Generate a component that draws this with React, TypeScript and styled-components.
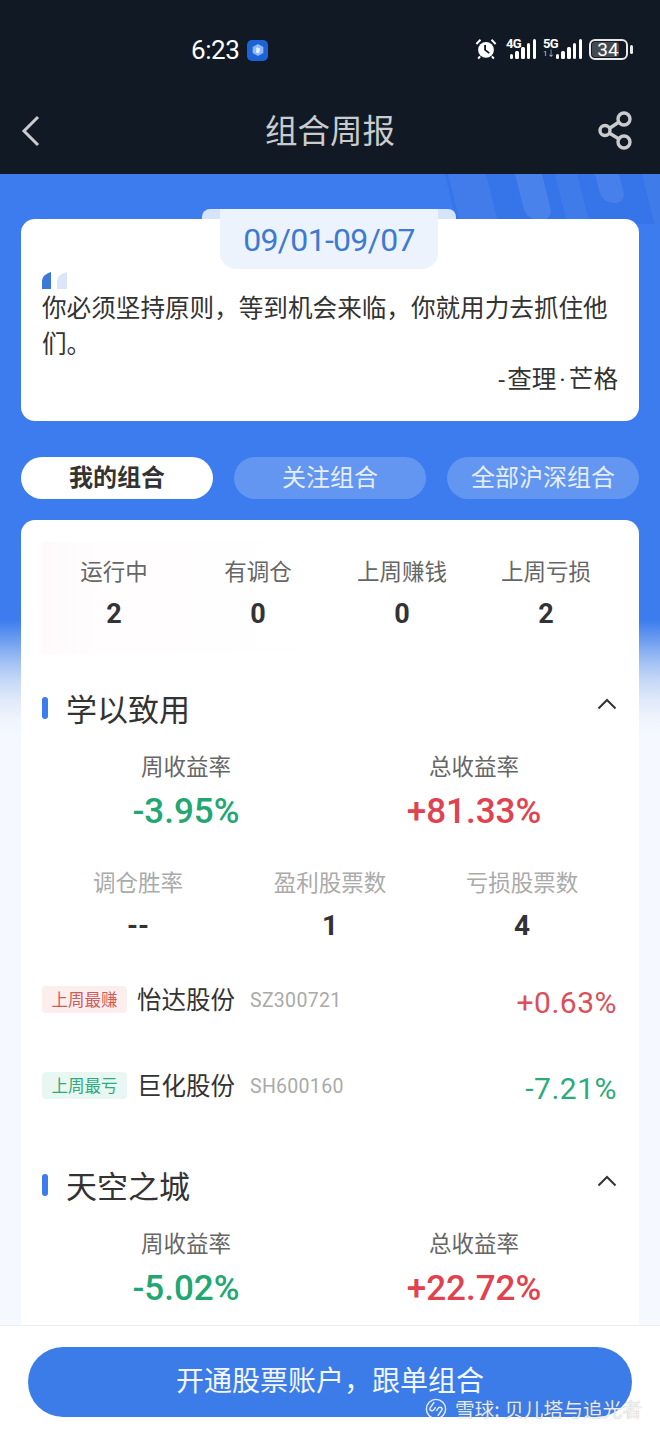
import styled, { createGlobalStyle } from "styled-components";

const GlobalStyle = createGlobalStyle`
  html, body {
    margin: 0;
    padding: 0;
    background: #f5f9ff;
  }
  * {
    box-sizing: border-box;
  }
`;

const cjk = `"Noto Sans CJK SC", "Noto Sans", sans-serif`;
const din = `Roboto, "Noto Sans CJK SC", sans-serif`;

const stats = [
  { label: "运行中", value: "2" },
  { label: "有调仓", value: "0" },
  { label: "上周赚钱", value: "0" },
  { label: "上周亏损", value: "2" },
];

const signalBars = [5, 8, 12, 16, 20];

const Signal = ({ label, sub }: { label: string; sub?: boolean }) => (
  <SignalWrap $wide={sub}>
    <SignalText>
      {label}
      {sub ? <SignalSub>1↓</SignalSub> : null}
    </SignalText>
    <Bars>
      {signalBars.map((h) => (
        <Bar key={h} $h={h} />
      ))}
    </Bars>
  </SignalWrap>
);

const Portfolio = ({ name, week, total }: { name: string; week: string; total: string }) => (
  <>
    <SectionHead>
      <SectionMark />
      <SectionName>{name}</SectionName>
      <Chevron viewBox="0 0 20 12">
        <path d="M1.500 10.500 10 2l8.500 8.500" fill="none" stroke="#333" strokeWidth="2" />
      </Chevron>
    </SectionHead>
    <ReturnRow>
      <ReturnCell>
        <ReturnLabel>周收益率</ReturnLabel>
        <ReturnValue $up={false}>{week}</ReturnValue>
      </ReturnCell>
      <ReturnCell>
        <ReturnLabel>总收益率</ReturnLabel>
        <ReturnValue $up>{total}</ReturnValue>
      </ReturnCell>
    </ReturnRow>
  </>
);

const App = () => {
  return (
    <Page>
      <GlobalStyle />
      <TopDark>
        <StatusBar>
          <TimeBox>
            <Time>6:23</Time>
            <AppBadge>
              <svg width="14" height="14" viewBox="0 0 12 12">
                <path d="M6 .8 10.600 3.400v5.200L6 11.200 1.400 8.600V3.400z" fill="#8fb8f5" />
                <path d="M4.500 8.500V4.500l1-1 1 1 1-.5v3l-1 1.500z" fill="#e8f1ff" />
              </svg>
            </AppBadge>
          </TimeBox>
          <StatusIcons>
            <AlarmIcon width="22" height="22" viewBox="0 0 24 24">
              <circle cx="12" cy="13" r="8.600" fill="#fff" />
              <path d="M11 7.500V13l4.500 3.500" fill="none" stroke="#111a24" strokeWidth="2" />
              <path d="M1.500 6.500 6 2M22.500 6.500 18 2M5.500 20l-2 2.500M18.500 20l2 2.500" stroke="#fff" strokeWidth="2.200" />
            </AlarmIcon>
            <Signal label="4G" />
            <Signal label="5G" sub />
            <Battery>
              <BatteryBody>
                <BatteryFill>34</BatteryFill>
              </BatteryBody>
              <BatteryTip />
            </Battery>
          </StatusIcons>
        </StatusBar>
        <NavBar>
          <svg width="20" height="32" viewBox="0 0 20 32">
            <path d="M17 2 3 16l14 14" fill="none" stroke="#c9cbce" strokeWidth="3" />
          </svg>
          <NavTitle>组合周报</NavTitle>
          <ShareIcon width="36" height="40" viewBox="0 0 36 40">
            <g fill="none" stroke="#c9cbce" strokeWidth="3.400">
              <circle cx="26" cy="8" r="6" />
              <circle cx="26" cy="31" r="6" />
              <circle cx="7" cy="19.500" r="5" />
              <path d="M12 17 21 11M12 22.500 21 28" />
            </g>
          </ShareIcon>
        </NavBar>
      </TopDark>
      <Body>
        <HeroArt viewBox="0 0 240 50" width="240" height="50">
          <polygon points="25,0 240,0 240,50 37,50" fill="#2f6be2" opacity="0.45" />
          <g transform="skewX(14)" fill="#fff">
            <rect x="28" y="-20" width="38" height="80" rx="10" opacity="0.06" />
            <rect x="95" y="-20" width="27" height="66" rx="12" opacity="0.1" />
            <rect x="135" y="-20" width="22" height="90" rx="10" opacity="0.05" />
            <rect x="175" y="-20" width="24" height="49" rx="11" opacity="0.09" />
            <rect x="222" y="-20" width="22" height="90" rx="10" opacity="0.05" />
          </g>
        </HeroArt>
        <QuoteCard>
          <DateFlap />
          <DateTab>09/01-09/07</DateTab>
          <QuoteMark>
            <svg width="26" height="17" viewBox="0 0 26 17">
              <path d="M0 17V9.500C0 5 3 2 9 0v17z" fill="#3b78d8" />
              <path d="M15 17V9.500C15 5 18 2 25 0v17z" fill="#dbe6f8" />
            </svg>
          </QuoteMark>
          <QuoteText>你必须坚持原则，等到机会来临，你就用力去抓住他们。</QuoteText>
          <QuoteAuthor>
            <AuthorDash>-</AuthorDash>查理<AuthorDot>·</AuthorDot>芒格
          </QuoteAuthor>
        </QuoteCard>
        <Tabs>
          <Tab $active>我的组合</Tab>
          <Tab>关注组合</Tab>
          <Tab>全部沪深组合</Tab>
        </Tabs>
        <MainCard>
          <StatPanel>
            {stats.map((s) => (
              <StatCell key={s.label}>
                <StatLabel>{s.label}</StatLabel>
                <StatValue>{s.value}</StatValue>
              </StatCell>
            ))}
          </StatPanel>
          <Portfolio name="学以致用" week="-3.95%" total="+81.33%" />
          <MetricRow>
            <MetricCell>
              <MetricLabel>调仓胜率</MetricLabel>
              <MetricValue>--</MetricValue>
            </MetricCell>
            <MetricCell>
              <MetricLabel>盈利股票数</MetricLabel>
              <MetricValue>1</MetricValue>
            </MetricCell>
            <MetricCell>
              <MetricLabel>亏损股票数</MetricLabel>
              <MetricValue>4</MetricValue>
            </MetricCell>
          </MetricRow>
          <StockList>
            <StockRow>
              <StockTag $up>上周最赚</StockTag>
              <StockName>怡达股份</StockName>
              <StockCode>SZ300721</StockCode>
              <StockPct $up>+0.63%</StockPct>
            </StockRow>
            <StockRow>
              <StockTag $up={false}>上周最亏</StockTag>
              <StockName>巨化股份</StockName>
              <StockCode>SH600160</StockCode>
              <StockPct $up={false}>-7.21%</StockPct>
            </StockRow>
          </StockList>
          <SecondBlock>
            <Portfolio name="天空之城" week="-5.02%" total="+22.72%" />
          </SecondBlock>
        </MainCard>
      </Body>
      <Footer>
        <OpenButton>开通股票账户，跟单组合</OpenButton>
      </Footer>
      <Watermark>
        <svg width="22" height="24" viewBox="0 0 24 24">
          <g fill="none" stroke="#fff" strokeWidth="1.600" opacity="0.85">
            <circle cx="12" cy="12" r="10.500" />
            <path d="M10 4.500 5.500 11c-1.500 2.500 3 4 4.500 1.500l1.500-2.500M14 19.500l4.500-6.500c1.500-2.500-3-4-4.500-1.500L12.500 14" />
          </g>
        </svg>
        <span>雪球: 贝儿塔与追光者</span>
      </Watermark>
    </Page>
  );
};

const Page = styled.div`
  position: relative;
  width: 660px;
  height: 1430px;
  overflow: hidden;
  display: flex;
  flex-direction: column;
  font-family: ${cjk};
  background: #f5f9ff;
`;

const TopDark = styled.div`
  height: 174px;
  flex: none;
  background: #111a24;
  display: flex;
  flex-direction: column;
`;

const StatusBar = styled.div`
  height: 100px;
  padding: 35px 27px 0 191px;
  display: flex;
  justify-content: space-between;
  align-items: flex-start;
`;

const TimeBox = styled.div`
  display: flex;
  align-items: center;
  gap: 6px;
  height: 30px;
`;

const Time = styled.span`
  font-family: ${din};
  font-size: 26px;
  letter-spacing: -0.4px;
  color: #fff;
  width: 50px;
  white-space: nowrap;
`;

const AppBadge = styled.span`
  width: 21px;
  height: 21px;
  border-radius: 5px;
  background: #1d63d8;
  display: flex;
  align-items: center;
  justify-content: center;
`;

const StatusIcons = styled.div`
  display: flex;
  align-items: center;
  gap: 7px;
  height: 28px;
`;

const AlarmIcon = styled.svg`
  margin-right: 2px;
`;

const SignalWrap = styled.div<{ $wide?: boolean }>`
  position: relative;
  width: ${(p) => (p.$wide ? 39 : 30)}px;
  height: 20px;
  display: flex;
  align-items: flex-end;
  justify-content: flex-end;
`;

const SignalText = styled.div`
  position: absolute;
  left: 0;
  top: 0;
  color: #fff;
  font-family: ${din};
  font-size: 13px;
  letter-spacing: -0.6px;
  line-height: 10px;
  font-weight: 700;
`;

const SignalSub = styled.div`
  font-size: 8px;
  line-height: 10px;
  font-weight: 400;
  color: #ccc;
`;

const Bars = styled.div`
  display: flex;
  align-items: flex-end;
  gap: 2.200px;
`;

const Bar = styled.i<{ $h: number }>`
  display: block;
  width: 3.500px;
  height: ${(p) => p.$h}px;
  background: #fff;
  border-radius: 1.500px;
`;

const Battery = styled.div`
  display: flex;
  align-items: center;
  gap: 2px;
`;

const BatteryBody = styled.div`
  width: 39px;
  height: 21px;
  border: 2px solid #e8e8e8;
  border-radius: 6px;
  padding: 1px;
`;

const BatteryFill = styled.div`
  width: 27px;
  height: 15px;
  background: #444a50;
  border-radius: 3px;
  color: #fff;
  font-family: ${din};
  font-size: 19px;
  line-height: 15px;
  white-space: nowrap;
  text-align: center;
  text-indent: 5px;
`;

const BatteryTip = styled.i`
  display: block;
  width: 3px;
  height: 9px;
  background: #e8e8e8;
  border-radius: 1.500px;
`;

const NavBar = styled.div`
  flex: 1;
  padding: 0 26px 12px 21px;
  display: grid;
  grid-template-columns: 1fr auto 1fr;
  align-items: center;
`;

const NavTitle = styled.div`
  font-size: 32.500px;
  line-height: 40px;
  color: #c9cbce;
  margin: 0 0 4px 5px;
`;

const ShareIcon = styled.svg`
  justify-self: end;
`;

const Body = styled.div`
  position: relative;
  flex: 1;
  padding: 45px 21px 0;
  background: linear-gradient(
    #3c7cee 0,
    #3c7cee 446px,
    #6d9df0 466px,
    #9dbef3 486px,
    #c5d8f7 506px,
    #dfe9fa 526px,
    #f0f5fd 546px,
    #f5f9ff 566px
  );
  min-height: 0;
`;

const HeroArt = styled.svg`
  position: absolute;
  top: 0;
  right: 0;
`;

const QuoteCard = styled.div`
  position: relative;
  height: 202px;
  border-radius: 14px;
  background: #fff;
  padding: 53px 21px 0;
`;

const DateFlap = styled.div`
  position: absolute;
  top: -10px;
  left: 181px;
  width: 254px;
  height: 10px;
  background: #d6e4fa;
  border-radius: 8px 8px 0 0;
`;

const DateTab = styled.div`
  position: absolute;
  top: -10px;
  left: 199px;
  width: 218px;
  height: 60px;
  background: #ecf3fd;
  border-radius: 0 0 16px 16px;
  color: #3e7ad0;
  font-family: ${din};
  font-size: 32px;
  letter-spacing: -0.7px;
  line-height: 62px;
  text-align: center;
`;

const QuoteMark = styled.div`
  height: 17px;
  line-height: 0;
`;

const QuoteText = styled.div`
  font-size: 24.600px;
  line-height: 36px;
  color: #333;
  margin-top: -1px;
`;

const QuoteAuthor = styled.div`
  font-family: ${din};
  font-size: 24.600px;
  line-height: 35px;
  color: #333;
  text-align: right;
  margin-top: 2px;
`;

const AuthorDash = styled.span`
  margin: 0 2px;
`;

const AuthorDot = styled.span`
  margin: 0 3px;
`;

const Tabs = styled.div`
  position: relative;
  margin-top: 36px;
  display: flex;
  gap: 21px;
`;

const Tab = styled.div<{ $active?: boolean }>`
  flex: 1;
  height: 42px;
  border-radius: 21px;
  text-align: center;
  font-size: 24px;
  line-height: 38px;
  font-weight: ${(p) => (p.$active ? 700 : 400)};
  background: ${(p) => (p.$active ? "#fff" : "#6296f1")};
  color: ${(p) => (p.$active ? "#333" : "#e6eefc")};
`;

const MainCard = styled.div`
  position: relative;
  margin-top: 21px;
  height: 840px;
  border-radius: 14px 14px 0 0;
  background: #fff;
  padding: 22px 21px 0;
`;

const StatPanel = styled.div`
  display: grid;
  grid-template-columns: repeat(4, 1fr);
  height: 112px;
  background: linear-gradient(90deg, #fefafb 0, #fffdfd 60px, #fff 280px);
  padding-top: 13px;
`;

const StatCell = styled.div`
  display: flex;
  flex-direction: column;
  align-items: center;
`;

const StatLabel = styled.div`
  font-size: 22.500px;
  line-height: 30px;
  color: #666;
`;

const StatValue = styled.div`
  font-family: ${din};
  font-size: 27px;
  line-height: 32px;
  font-weight: 700;
  color: #333;
  margin-top: 13px;
`;

const SectionHead = styled.div`
  margin-top: 33px;
  height: 42px;
  display: flex;
  align-items: center;
`;

const SectionMark = styled.i`
  display: block;
  width: 6px;
  height: 22px;
  border-radius: 3px;
  background: #3c7cee;
  margin-right: 18px;
`;

const SectionName = styled.div`
  flex: 1;
  font-size: 31px;
  line-height: 42px;
  color: #333;
`;

const Chevron = styled.svg`
  width: 20px;
  height: 12px;
  margin: 0 1px 8px 0;
`;

const ReturnRow = styled.div`
  margin-top: 22px;
  display: grid;
  grid-template-columns: 288px 288px;
`;

const ReturnCell = styled.div`
  display: flex;
  flex-direction: column;
  align-items: center;
`;

const ReturnLabel = styled.div`
  font-size: 22.500px;
  line-height: 28px;
  color: #666;
`;

const ReturnValue = styled.div<{ $up: boolean }>`
  font-family: ${din};
  font-size: 35px;
  line-height: 40px;
  font-weight: 500;
  margin-top: 13px;
  color: ${(p) => (p.$up ? "#e0424f" : "#22a772")};
`;

const MetricRow = styled.div`
  margin-top: 35px;
  display: grid;
  grid-template-columns: repeat(3, 192px);
`;

const MetricCell = styled.div`
  display: flex;
  flex-direction: column;
  align-items: center;
`;

const MetricLabel = styled.div`
  font-size: 22.500px;
  line-height: 28px;
  color: #aaa;
`;

const MetricValue = styled.div`
  font-family: ${din};
  font-size: 28px;
  line-height: 32px;
  font-weight: 700;
  color: #333;
  margin-top: 15px;
`;

const StockList = styled.div`
  margin-top: 14px;
`;

const StockRow = styled.div`
  height: 86px;
  display: flex;
  align-items: center;
`;

const StockTag = styled.span<{ $up: boolean }>`
  width: 85px;
  height: 27px;
  border-radius: 4px;
  font-size: 16.500px;
  line-height: 26px;
  text-align: center;
  background: ${(p) => (p.$up ? "#fdeeee" : "#e9f7f2")};
  color: ${(p) => (p.$up ? "#cf5c5c" : "#2cab7c")};
`;

const StockName = styled.span`
  margin-left: 10px;
  font-size: 24.500px;
  line-height: 32px;
  color: #333;
`;

const StockCode = styled.span`
  margin: 3px 0 0 15px;
  font-family: ${din};
  font-size: 19.500px;
  letter-spacing: 0.3px;
  color: #aaa;
`;

const StockPct = styled.span<{ $up: boolean }>`
  margin: 6px 1px 0 auto;
  font-family: ${din};
  font-size: 30px;
  letter-spacing: 0.5px;
  color: ${(p) => (p.$up ? "#d9505a" : "#2bab7c")};
`;

const SecondBlock = styled.div`
  padding-top: 3px;
  margin-top: -3px;
  padding-bottom: 0;
  & > div:first-child {
    margin-top: 36px;
  }
`;

const Footer = styled.div`
  position: absolute;
  left: 0;
  right: 0;
  bottom: 0;
  height: 105px;
  background: #fff;
  border-top: 1px solid #eceef0;
  padding: 21px 28px 0;
`;

const OpenButton = styled.div`
  height: 70px;
  border-radius: 35px;
  background: #3c7ce8;
  color: #f2f6fd;
  font-size: 28px;
  line-height: 64px;
  text-align: center;
`;

const Watermark = styled.div`
  position: absolute;
  right: 18px;
  bottom: 9px;
  display: flex;
  align-items: center;
  gap: 8px;
  font-size: 19.700px;
  line-height: 24px;
  color: rgba(255, 255, 255, 0.85);
  text-shadow: 0 0 1px rgba(120, 120, 120, 0.7);
`;

export default App;
